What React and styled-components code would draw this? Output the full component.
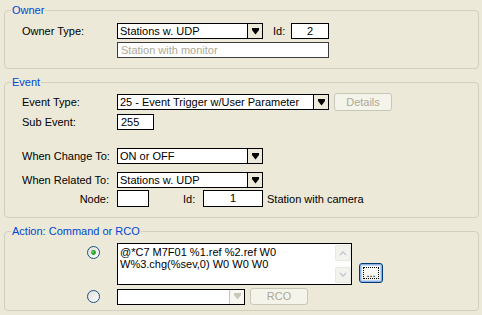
import React from "react";
import styled, { createGlobalStyle } from "styled-components";

const GlobalStyle = createGlobalStyle`
  html, body { margin: 0; padding: 0; background: #ECE9D8; }
  body { font-family: "Liberation Sans", Arial, sans-serif; font-size: 11px; color: #000; }
  * { box-sizing: border-box; }
`;

const Window = styled.div`
  width: 482px;
  height: 315px;
  background: #ECE9D8;
  padding: 4px 3px 0 4px;
  display: flex;
  flex-direction: column;
  gap: 7px;
  overflow: hidden;
`;

const Group = styled.fieldset`
  margin: 0;
  padding: 0;
  min-width: 0;
  border: 1px solid #D0D0BF;
  border-radius: 4px;
`;

const Legend = styled.legend`
  margin-left: 6px;
  padding: 0 1px;
  color: #0046D5;
  font-size: 11px;
  line-height: 13px;
`;

const GroupBody = styled.div`
  padding: ${(p) => p.$pad};
  display: flex;
  flex-direction: column;
`;

const Row = styled.div`
  display: flex;
  align-items: center;
  margin-top: ${(p) => p.$mt || 0}px;
`;

const Label = styled.div`
  width: 95px;
  flex: none;
  white-space: nowrap;
  text-align: ${(p) => (p.$right ? "right" : "left")};
  padding-right: ${(p) => (p.$right ? 8 : 0)}px;
`;

const InlineLabel = styled.div`
  flex: none;
  width: ${(p) => p.$w}px;
  margin-left: ${(p) => p.$ml || 0}px;
  white-space: nowrap;
`;

const ComboBox = styled.div`
  display: flex;
  flex: none;
  width: ${(p) => p.$w}px;
  height: 16px;
  border: 1px solid #000;
  background: #fff;
`;

const ComboText = styled.div`
  flex: 1;
  padding-left: 2px;
  line-height: 14px;
  white-space: nowrap;
  overflow: hidden;
`;

const ComboButton = styled.div`
  width: 15px;
  flex: none;
  border-left: 1px solid ${(p) => (p.$disabled ? "#C9C7BA" : "#000")};
  background: ${(p) => (p.$disabled ? "#F7F6F0" : "#ECE9D8")};
  display: flex;
  align-items: center;
  justify-content: center;
`;

const TextBox = styled.div`
  flex: none;
  width: ${(p) => p.$w}px;
  height: ${(p) => p.$h || 16}px;
  border: 1px solid ${(p) => (p.$soft ? "#3C3C3C" : "#000")};
  background: #fff;
  color: ${(p) => (p.$placeholder ? "#ACA899" : "#000")};
  text-align: ${(p) => (p.$center ? "center" : "left")};
  padding: 0 3px;
  line-height: ${(p) => (p.$h || 16) - 2}px;
  white-space: nowrap;
  overflow: hidden;
`;

const DisabledButton = styled.div`
  flex: none;
  width: 58px;
  height: ${(p) => p.$h}px;
  margin-left: 5px;
  border: 1px solid #C9C7BA;
  border-radius: 3px;
  background: #F5F4EA;
  color: #ACA899;
  text-align: center;
  line-height: ${(p) => p.$h - 2}px;
`;

const RadioCell = styled.div`
  width: 95px;
  flex: none;
  padding-left: 65px;
  display: flex;
  align-self: ${(p) => (p.$top ? "flex-start" : "center")};
  margin-top: ${(p) => (p.$top ? 3 : 0)}px;
`;

const Memo = styled.div`
  display: flex;
  flex: none;
  width: 235px;
  height: 42px;
  border: 1px solid #000;
  background: #fff;
`;

const MemoText = styled.div`
  flex: 1;
  padding: 2px 2px 0 2px;
  line-height: 12px;
`;

const ScrollBar = styled.div`
  width: 16px;
  flex: none;
  padding: 1px 0;
  display: flex;
  flex-direction: column;
  justify-content: space-between;
  background: #FDFDFB;
`;

const ScrollButton = styled.div`
  width: 16px;
  height: 16px;
  border: 1px solid #E9E8E1;
  border-radius: 2px;
  background: #F3F3EE;
  display: flex;
  align-items: center;
  justify-content: center;
`;

const DotsButton = styled.div`
  flex: none;
  width: 24px;
  height: 20px;
  margin-left: 7px;
  align-self: flex-end;
  margin-bottom: 2px;
  border: 1px solid #003C74;
  border-radius: 3px;
  background: linear-gradient(#FFFFFF, #EEEDE5);
  box-shadow: inset 0 0 0 1px #8DB2E3, inset 0 0 0 2px #C1D4F5;
  padding: 3px;
  display: flex;
`;

const FocusRect = styled.div`
  flex: 1;
  border: 1px dotted #000;
  display: flex;
  align-items: flex-end;
  justify-content: center;
  line-height: 9px;
  font-size: 11px;
`;

const Arrow = ({ disabled }) => (
  <svg width="7" height="7" viewBox="0 0 7 7">
    <path d="M0 0H7V2L3.5 6.5L0 2Z" fill={disabled ? "#C9C7BA" : "#000"} />
  </svg>
);

const Chevron = ({ up }) => (
  <svg width="8" height="6" viewBox="0 0 8 6">
    <path
      d={up ? "M1 5L4 2L7 5" : "M1 1L4 4L7 1"}
      fill="none"
      stroke="#C9CBD3"
      strokeWidth="1.6"
    />
  </svg>
);

const Radio = ({ checked }) => (
  <svg width="13" height="13" viewBox="0 0 13 13">
    <defs>
      <linearGradient id={checked ? "rgA" : "rgB"} x1="0" y1="0" x2="1" y2="1">
        <stop offset="0" stopColor="#DCDCD7" />
        <stop offset="1" stopColor="#FFFFFF" />
      </linearGradient>
    </defs>
    <circle cx="6.5" cy="6.5" r="6" fill={`url(#${checked ? "rgA" : "rgB"})`} stroke="#1C5180" />
    {checked && <circle cx="6.5" cy="6.5" r="2.4" fill="#21A121" />}
    {checked && <circle cx="6" cy="6" r="0.9" fill="#7CE07A" />}
  </svg>
);

const Combo = ({ w, value, disabled }) => (
  <ComboBox $w={w}>
    <ComboText>{value}</ComboText>
    <ComboButton $disabled={disabled}>
      <Arrow disabled={disabled} />
    </ComboButton>
  </ComboBox>
);

export default function App() {
  return (
    <>
      <GlobalStyle />
      <Window>
        <Group style={{ height: 65 }}>
          <Legend>Owner</Legend>
          <GroupBody $pad="6px 0 0 17px">
            <Row>
              <Label>Owner Type:</Label>
              <Combo w={146} value="Stations w. UDP" />
              <InlineLabel $w={18} $ml={10}>Id:</InlineLabel>
              <TextBox $w={38} $center>2</TextBox>
            </Row>
            <Row $mt={3}>
              <Label />
              <TextBox $w={212} $placeholder $soft>Station with monitor</TextBox>
            </Row>
          </GroupBody>
        </Group>

        <Group style={{ height: 142 }}>
          <Legend>Event</Legend>
          <GroupBody $pad="4px 0 0 17px">
            <Row>
              <Label>Event Type:</Label>
              <Combo w={212} value="25 - Event Trigger w/User Parameter" />
              <DisabledButton $h={18}>Details</DisabledButton>
            </Row>
            <Row $mt={3}>
              <Label>Sub Event:</Label>
              <TextBox $w={37}>255</TextBox>
            </Row>
            <Row $mt={18}>
              <Label>When Change To:</Label>
              <Combo w={146} value="ON or OFF" />
            </Row>
            <Row $mt={8}>
              <Label>When Related To:</Label>
              <Combo w={146} value="Stations w. UDP" />
            </Row>
            <Row $mt={2}>
              <Label $right>Node:</Label>
              <TextBox $w={32} $h={17} />
              <InlineLabel $w={20} $ml={34}>Id:</InlineLabel>
              <TextBox $w={60} $h={17} $center>1</TextBox>
              <InlineLabel $ml={4}>Station with camera</InlineLabel>
            </Row>
          </GroupBody>
        </Group>

        <Group style={{ height: 86 }}>
          <Legend>Action: Command or RCO</Legend>
          <GroupBody $pad="5px 0 0 17px">
            <Row>
              <RadioCell $top>
                <Radio checked />
              </RadioCell>
              <Memo>
                <MemoText>@*C7 M7F01 %1.ref %2.ref W0 W%3.chg(%sev,0) W0 W0 W0</MemoText>
                <ScrollBar>
                  <ScrollButton><Chevron up /></ScrollButton>
                  <ScrollButton><Chevron /></ScrollButton>
                </ScrollBar>
              </Memo>
              <DotsButton>
                <FocusRect>...</FocusRect>
              </DotsButton>
            </Row>
            <Row $mt={3}>
              <RadioCell>
                <Radio />
              </RadioCell>
              <Combo w={128} value="" disabled />
              <DisabledButton $h={17}>RCO</DisabledButton>
            </Row>
          </GroupBody>
        </Group>
      </Window>
    </>
  );
}
